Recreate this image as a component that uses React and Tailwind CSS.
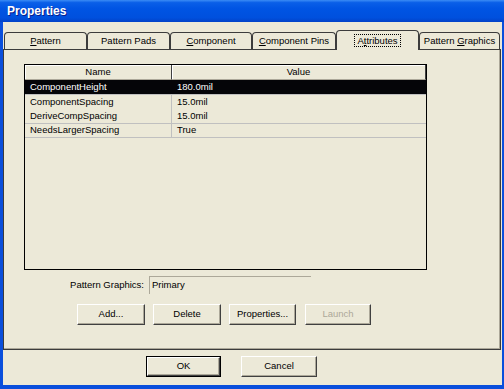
const tabs = [
  { label: "Pattern", u: 0, w: 83 },
  { label: "Pattern Pads", u: -1, w: 83 },
  { label: "Component", u: 0, w: 82 },
  { label: "Component Pins", u: 0, w: 84 },
  { label: "Attributes", u: 1, w: 83, active: true },
  { label: "Pattern Graphics", u: 8, w: 81 },
];

const rows = [
  { name: "ComponentHeight", value: "180.0mil", h: "h-[15px]", line: true, selected: true },
  { name: "ComponentSpacing", value: "15.0mil", h: "h-[15px]", line: false },
  { name: "DeriveCompSpacing", value: "15.0mil", h: "h-[14px]", line: true },
  { name: "NeedsLargerSpacing", value: "True", h: "h-[14px]", line: true },
];

function Mnemonic({ text, u }) {
  if (u < 0) return <span className="whitespace-pre">{text}</span>;
  return (
    <span className="whitespace-pre">
      {text.slice(0, u)}
      <span className="underline underline-offset-1">{text[u]}</span>
      {text.slice(u + 1)}
    </span>
  );
}

function Button({ children, w, disabled, def }) {
  const inner = (
    <div
      className={`flex h-full w-full items-center justify-center border border-t-white border-l-white border-r-[#404040] border-b-[#404040] shadow-[inset_-1px_-1px_0_#aca899] ${
        disabled ? "text-[#aca899]" : "text-black"
      }`}
    >
      {children}
    </div>
  );
  if (def) {
    return <div className={`${w} h-[21px] border border-black bg-[#ece9d8]`}>{inner}</div>;
  }
  return <div className={`${w} h-[21px] bg-[#ece9d8]`}>{inner}</div>;
}

export default function App() {
  return (
    <div
      className="flex h-[389px] w-[504px] flex-col bg-[#0a4fdc] text-[9.5px] text-black"
      style={{ fontFamily: '"Liberation Sans", Arial, sans-serif' }}
    >
      {/* Title bar */}
      <div className="flex h-[22px] items-center bg-[linear-gradient(180deg,#3b8cf5_0%,#0a5fe8_12%,#0054e3_40%,#0050de_80%,#0242c8_100%)] pl-[7px]">
        <span className="text-[12px] font-bold text-white [text-shadow:1px_1px_0_#0a1e8c]">Properties</span>
      </div>

      {/* Body */}
      <div className="ml-[3px] mr-[2px] mb-[4px] flex flex-1 flex-col bg-[#ece9d8]">
        {/* Tabs */}
        <div className="mt-[8px] flex h-[19px] items-end pl-[1px]">
          {tabs.map((t) =>
            t.active ? (
              <div
                key={t.label}
                className="relative z-10 -mb-px flex h-[20px] items-center justify-center rounded-t-[4px] border border-b-0 border-[#3c3c3c] bg-[#ece9d8]"
                style={{ width: t.w }}
              >
                <span className="border border-dotted border-black px-[2px] leading-[11px]">
                  <Mnemonic text={t.label} u={t.u} />
                </span>
              </div>
            ) : (
              <div
                key={t.label}
                className="flex h-[17px] items-center justify-center rounded-t-[4px] border border-b-0 border-[#3c3c3c] bg-[#ece9d8]"
                style={{ width: t.w }}
              >
                <Mnemonic text={t.label} u={t.u} />
              </div>
            )
          )}
        </div>

        {/* Panel */}
        <div className="h-[301px] w-[498px] border border-[#3c3c3c] pl-[20px] pt-[14px] shadow-[inset_-1px_-1px_0_#aca899]">
          {/* List */}
          <div className="h-[206px] w-[403px] border border-black bg-[#ece9d8]">
            <div className="flex h-[15px]">
              <div className="flex w-[147px] items-center justify-center border-r border-b border-r-[#404040] border-b-[#aca899] shadow-[inset_1px_1px_0_white]">
                Name
              </div>
              <div className="flex flex-1 items-center justify-center border-r border-b border-r-[#404040] border-b-[#aca899] shadow-[inset_1px_1px_0_white]">
                Value
              </div>
            </div>
            {rows.map((r) => (
              <div
                key={r.name}
                className={`flex ${r.h} ${r.line ? "border-b border-[#c0c0c0]" : ""} ${
                  r.selected ? "bg-[#050508] text-white border-[#404040]" : ""
                }`}
              >
                <div className={`flex w-[147px] items-center pl-[5px] ${r.selected ? "" : "border-r border-[#c0c0c0]"}`}>
                  {r.name}
                </div>
                <div className="flex flex-1 items-center pl-[5px]">{r.value}</div>
              </div>
            ))}
          </div>

          {/* Pattern Graphics */}
          <div className="mt-[6px] flex h-[18px] items-center">
            <div className="w-[120px] text-right">Pattern Graphics:</div>
            <div className="ml-[5px] flex h-[18px] w-[162px] items-center border-t border-l border-t-[#aca899] border-l-[#aca899] pl-[2px]">
              Primary
            </div>
          </div>

          {/* Buttons */}
          <div className="ml-[53px] mt-[10px] flex gap-[8px]">
            <Button w="w-[68px]">Add...</Button>
            <Button w="w-[68px]">Delete</Button>
            <Button w="w-[67px]">Properties...</Button>
            <div className="ml-[1px] flex">
              <Button w="w-[66px]" disabled>
                Launch
              </Button>
            </div>
          </div>
        </div>

        {/* Dialog buttons */}
        <div className="mt-[6px] flex gap-[20px] pl-[143px]">
          <Button w="w-[75px]" def>
            OK
          </Button>
          <Button w="w-[76px]">Cancel</Button>
        </div>
      </div>
    </div>
  );
}
